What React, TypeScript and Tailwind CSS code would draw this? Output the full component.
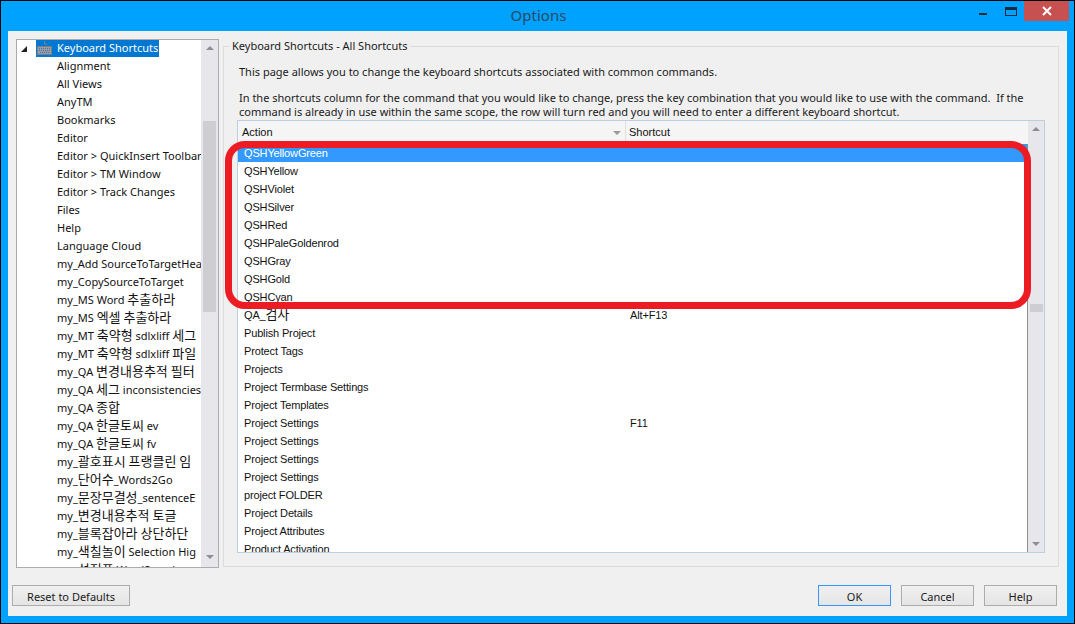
import React from "react";

const tree = [
  "Alignment",
  "All Views",
  "AnyTM",
  "Bookmarks",
  "Editor",
  "Editor >  QuickInsert Toolbar",
  "Editor > TM Window",
  "Editor > Track Changes",
  "Files",
  "Help",
  "Language Cloud",
  "my_Add SourceToTargetHeader",
  "my_CopySourceToTarget",
  "my_MS Word 추출하라",
  "my_MS 엑셀 추출하라",
  "my_MT 축약형 sdlxliff 세그",
  "my_MT 축약형 sdlxliff 파일",
  "my_QA 변경내용추적 필터",
  "my_QA 세그 inconsistencies",
  "my_QA 종합",
  "my_QA 한글토씨 ev",
  "my_QA 한글토씨 fv",
  "my_괄호표시 프랭클린 임",
  "my_단어수_Words2Go",
  "my_문장무결성_sentenceE",
  "my_변경내용추적 토글",
  "my_블록잡아라 상단하단",
  "my_색칠놀이 Selection Hig",
  "my_설정표 WordSearch",
];

const rows: [string, string][] = [
  ["QSHYellow", ""],
  ["QSHViolet", ""],
  ["QSHSilver", ""],
  ["QSHRed", ""],
  ["QSHPaleGoldenrod", ""],
  ["QSHGray", ""],
  ["QSHGold", ""],
  ["QSHCyan", ""],
  ["QA_검사", "Alt+F13"],
  ["Publish Project", ""],
  ["Protect Tags", ""],
  ["Projects", ""],
  ["Project Termbase Settings", ""],
  ["Project Templates", ""],
  ["Project Settings", "F11"],
  ["Project Settings", ""],
  ["Project Settings", ""],
  ["Project Settings", ""],
  ["project FOLDER", ""],
  ["Project Details", ""],
  ["Project Attributes", ""],
  ["Product Activation", ""],
];

const ui = "font-['Noto_Sans','Noto_Sans_CJK_KR',sans-serif]";
const cell = "font-['Liberation_Sans','Noto_Sans_CJK_KR',sans-serif]";

// Hangul runs are drawn larger than the Latin text, as in the original dialog.
function Mixed({ text }: { text: string }) {
  return (
    <>
      {text.split(/([\uAC00-\uD7A3]+)/).map((part, i) =>
        i % 2 === 1 ? (
          <span key={i} className="text-[13px] leading-[1px]">
            {part}
          </span>
        ) : (
          part
        )
      )}
    </>
  );
}

function Btn({ label, focus, w }: { label: string; focus?: boolean; w: string }) {
  return (
    <button
      className={`${w} h-[21px] pt-[1px] border ${focus ? "border-[#3399ff]" : "border-[#acacac]"} bg-gradient-to-b from-[#f0f0f0] to-[#e5e5e5] text-[11px] leading-[15px] text-[#1a1a1a] ${ui}`}
    >
      {label}
    </button>
  );
}

function Up() {
  return <div className="w-0 h-0 border-x-[4px] border-x-transparent border-b-[4px] border-b-[#8d8d9a]" />;
}
function Down() {
  return <div className="w-0 h-0 border-x-[4px] border-x-transparent border-t-[4px] border-t-[#8d8d9a]" />;
}

function Keyboard() {
  return (
    <svg width="15" height="15" viewBox="0 0 15 15" className="shrink-0">
      <path d="M7.5 0.5V2.5C7.5 3.5 10 2.5 10 4" fill="none" stroke="#8a8a8a" />
      <rect x="0.5" y="5.5" width="14" height="8" fill="#8f9fb3" stroke="#7d7d7d" />
      <path d="M2 7.5H13M2 9.5H13M3 11.5H12" stroke="#5f6f82" strokeDasharray="1 1" />
    </svg>
  );
}

export default function App() {
  return (
    <div className={`w-[1075px] h-[624px] relative overflow-hidden border border-black bg-[#00a2ff] flex flex-col ${ui}`}>
      {/* Title bar */}
      <div className="h-[30px] shrink-0 flex items-start relative">
        <div className="flex-1 text-center text-[15px] leading-[28px] text-[#2b4a66] pl-[2px]">Options</div>
        <div className="absolute left-[978px] top-0 flex items-start">
          <div className="w-[8px] h-[2px] bg-[#1b2b3b] mt-[12px]" />
          <div className="w-[10px] h-[5px] border border-t-[3px] border-[#1b2b3b] box-content ml-[18px] mt-[6px]" />
          <div className="w-[45px] h-[20px] bg-[#c75050] flex items-center justify-center ml-[7px]">
            <svg width="10" height="10" viewBox="0 0 10 10">
              <path d="M1 1L9 9M9 1L1 9" stroke="#fff" strokeWidth="2" />
            </svg>
          </div>
        </div>
      </div>

      {/* Client */}
      <div className="mx-[7px] h-[585px] bg-[#f0f0f0] flex flex-col">
        <div className="h-[544px] flex items-start pl-[8px] pt-[8px] gap-[4px]">
          {/* Tree */}
          <div className="w-[203px] h-[529px] border border-[#acacac] bg-white flex overflow-hidden">
            <div className="w-[184px] overflow-hidden shrink-0 text-[11px] text-[#111] pl-[4px]">
              <div className="h-[17px] flex items-center">
                <div className="w-0 h-0 border-l-[6px] border-l-transparent border-b-[6px] border-b-[#222] mr-[9px]" />
                <div className="flex items-center bg-[#0078d2] h-[17px] pl-[1px]">
                  <div className="w-[20px] flex justify-start"><Keyboard /></div>
                  <span className="text-white whitespace-nowrap pr-[1px]">Keyboard Shortcuts</span>
                </div>
              </div>
              {tree.map((t) => (
                <div key={t} className="h-[18px] leading-[18px] pl-[36px] whitespace-nowrap">
                  <Mixed text={t} />
                </div>
              ))}
            </div>
            <div className="w-[17px] bg-[#e6e6eb] flex flex-col items-center pt-[6px]">
              <Up />
              <div className="w-[13px] h-[191px] bg-[#cdcdd2] mt-[71px]" />
              <div className="mt-auto mb-[8px]"><Down /></div>
            </div>
          </div>

          {/* Group box */}
          <div className="relative mt-[7px] w-[836px] h-[521px] border border-[#dcdcdc] pl-[13px] pr-[13px]">
            <div className="absolute left-[5px] -top-[9px] px-[3px] bg-[#f0f0f0] text-[11px] leading-[15px] text-[#1a1a1a] whitespace-nowrap">
              Keyboard Shortcuts - All Shortcuts
            </div>
            <div className="pt-[18px] pl-[2px] text-[11px] leading-[14px] text-[#1a1a1a]">
              <p className="h-[26px] whitespace-nowrap">This page allows you to change the keyboard shortcuts associated with common commands.</p>
              <p className="whitespace-pre">In the shortcuts column for the command that you would like to change, press the key combination that you would like to use with the command.  If the</p>
              <p className="whitespace-nowrap">command is already in use within the same scope, the row will turn red and you will need to enter a different keyboard shortcut.</p>
            </div>

            {/* Table */}
            <div className="mt-[1px] w-[808px] h-[433px] border border-[#bccfde] flex bg-white overflow-hidden">
              <div className="w-[790px] flex flex-col overflow-hidden">
                <div className={`h-[23px] shrink-0 bg-[#f5f5f5] flex text-[11px] leading-[23px] text-[#111] ${cell}`}>
                  <div className="w-[388px] pl-[4px] border-r border-[#e0e0e0] flex items-center justify-between pr-[4px]">
                    <span>Action</span>
                    <div className="w-0 h-0 border-x-[4px] border-x-transparent border-t-[4px] border-t-[#9a9a9a]" />
                  </div>
                  <div className="pl-[3px]">Shortcut</div>
                </div>
                <div className={`flex-1 border-r border-[#8f8f8f] text-[11px] tracking-[-0.15px] leading-[18px] text-[#111] ${cell}`}>
                  <div className="h-[18px] bg-[#3399ff] text-white pl-[6px]">QSHYellowGreen</div>
                  {rows.map(([a, s], i) => (
                    <div key={i} className="h-[18px] flex">
                      <div className="w-[386px] pl-[6px] whitespace-nowrap"><Mixed text={a} /></div>
                      <div className="pl-[6px]">{s}</div>
                    </div>
                  ))}
                </div>
              </div>
              <div className="flex-1 bg-[#e6e6eb] flex flex-col items-center pt-[6px]">
                <Up />
                <div className="w-[13px] h-[8px] bg-[#cdcdd2] mt-[173px]" />
                <div className="mt-auto mb-[6px]"><Down /></div>
              </div>
            </div>
          </div>
        </div>

        {/* Footer */}
        <div className="flex-1 flex items-start px-[4px] pt-[10px]">
          <Btn label="Reset to Defaults" w="w-[118px]" />
          <div className="ml-auto flex gap-[10px] pr-[6px]">
            <Btn label="OK" focus w="w-[73px]" />
            <Btn label="Cancel" w="w-[73px]" />
            <Btn label="Help" w="w-[73px]" />
          </div>
        </div>
      </div>

      {/* Red annotation */}
      <div className="absolute left-[224px] top-[140px] w-[806px] h-[168px] border-[7px] border-[#ed1c24] rounded-[20px] pointer-events-none" />
    </div>
  );
}
